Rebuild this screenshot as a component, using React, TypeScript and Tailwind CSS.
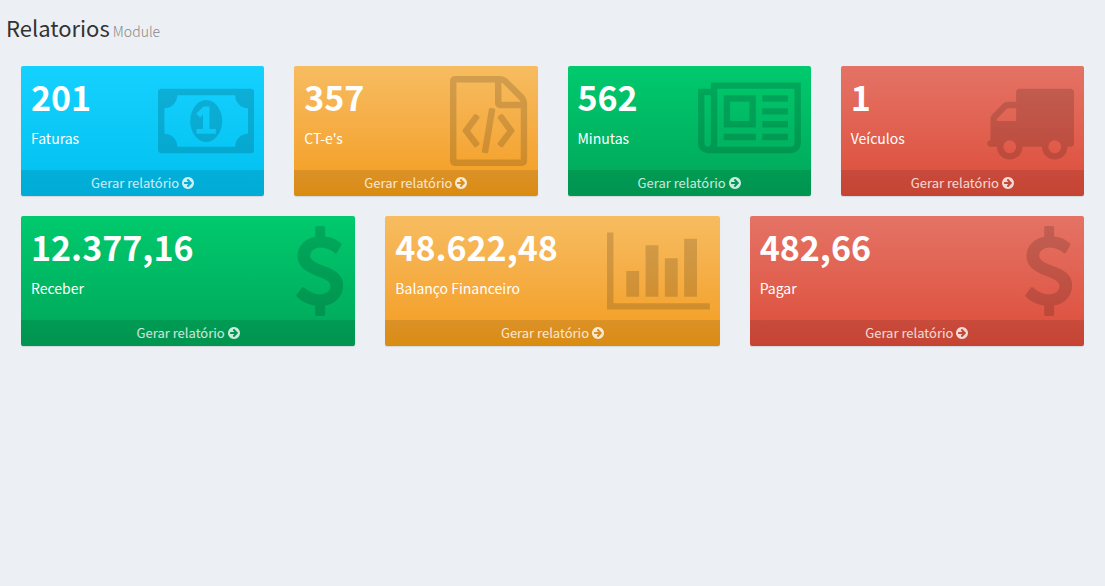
type IconShape = { width: number; x: number; d: string };

const MONEY: IconShape = {
  width: 1920,
  x: 0,
  d: "M768 1152h384v-96h-128v-448h-114l-148 137 77 80q42-37 55-57h2v288h-128v96zm512-256q0 70-21 142t-59.5 134-101.5 101-138 39-138-39-101.5-101-59.5-134-21-142 21-142 59.5-134 101.5-101 138-39 138 39 101.5 101 59.5 134 21 142zm512 256v-512q-106 0-181-75t-75-181h-1152q0 106-75 181t-181 75v512q106 0 181 75t75 181h1152q0-106 75-181t181-75zm128-832v1152q0 26-19 45t-45 19h-1792q-26 0-45-19t-19-45v-1152q0-26 19-45t45-19h1792q26 0 45 19t19 45z",
};

const FILE_CODE: IconShape = {
  width: 1536,
  x: 128,
  d: "M1596 380q28 28 48 76t20 88v1152q0 40-28 68t-68 28h-1344q-40 0-68-28t-28-68v-1600q0-40 28-68t68-28h896q40 0 88 20t76 48zm-444-244v376h376q-10-29-22-41l-313-313q-12-12-41-22zm384 1528v-1024h-416q-40 0-68-28t-28-68v-416h-768v1536h1280zm-928-896q8-11 21-12.5t24 6.5l51 38q11 8 12.5 21t-6.5 24l-182 243 182 243q8 11 6.5 24t-12.5 21l-51 38q-11 8-24 6.5t-21-12.5l-226-301q-14-19 0-38zm802 301q14 19 0 38l-226 301q-8 11-21 12.5t-24-6.5l-51-38q-11-8-12.5-21t6.5-24l182-243-182-243q-8-11-6.5-24t12.5-21l51-38q11-8 24-6.5t21 12.5zm-620 461q-13-2-20.5-13t-5.5-24l138-831q2-13 13-20.5t24-5.5l63 10q13 2 20.5 13t5.5 24l-138 831q-2 13-13 20.5t-24 5.5z",
};

const NEWSPAPER: IconShape = {
  width: 2048,
  x: 0,
  d: "M1024 512h-384v384h384v-384zm128 640v128h-640v-128h640zm0-768v640h-640v-640h640zm640 768v128h-512v-128h512zm0-256v128h-512v-128h512zm0-256v128h-512v-128h512zm0-256v128h-512v-128h512zm-1536 960v-960h-128v960q0 26 19 45t45 19 45-19 19-45zm1664 0v-1088h-1536v1088q0 33-11 64h1483q26 0 45-19t19-45zm128-1216v1216q0 80-56 136t-136 56h-1664q-80 0-136-56t-56-136v-1088h256v-128h1792z",
};

const TRUCK: IconShape = {
  width: 1792,
  x: 0,
  d: "M640 1408q0-52-38-90t-90-38-90 38-38 90 38 90 90 38 90-38 38-90zm-384-512h384v-256h-158q-13 0-22 9l-195 195q-9 9-9 22v30zm1280 512q0-52-38-90t-90-38-90 38-38 90 38 90 90 38 90-38 38-90zm256-1088v1024q0 15-4 26.5t-13.5 18.5-16.5 11.5-23.5 6-22.5 2-25.5 0-22.5-.5q0 106-75 181t-181 75-181-75-75-181h-384q0 106-75 181t-181 75-181-75-75-181h-64q-3 0-22.5.5t-25.5 0-22.5-2-23.5-6-16.5-11.5-13.5-18.5-4-26.5q0-26 19-45t45-19v-320q0-8-.5-35t0-38 2.5-34.5 6.5-37 14-30.5 22.5-30l198-198q19-19 50.5-32t58.5-13h160v-192q0-26 19-45t45-19h1024q26 0 45 19t19 45z",
};

const DOLLAR: IconShape = {
  width: 1024,
  x: 384,
  d: "M1362 1185q0 153-99.5 263.5t-258.5 136.5v175q0 14-9 23t-23 9h-135q-13 0-22.5-9.5t-9.5-22.5v-175q-66-9-127.5-31t-101.5-44.5-74-48-46.5-37.5-17.5-18q-17-21-2-41l103-135q7-10 23-12 15-2 24 9l2 2q113 99 243 125 37 8 74 8 81 0 142.5-43t61.5-122q0-28-15-53t-33.5-42-58.5-37.5-66-32-80-32.5q-39-16-61.5-25t-61.5-26.5-62.5-31-56.5-35.5-53.5-42.5-43.5-49-35.5-58-21-66.5-8.5-78q0-138 98-242t255-134v-180q0-13 9.5-22.5t22.5-9.5h135q14 0 23 9t9 23v176q57 6 110.5 23t87 33.5 63.5 37.5 39 29 15 14q17 18 5 38l-81 146q-8 15-23 16-14 3-27-7-3-3-14.5-12t-39-26.5-58.5-32-74.5-26-85.5-11.5q-95 0-155 43t-60 111q0 26 8.5 48t29.5 41.5 39.5 33 56 31 60.5 27 70 27.5q53 20 81 31.5t76 35 75.5 42.5 62 50 53 63.5 31.5 76.5 13 94z",
};

const BAR_CHART: IconShape = {
  width: 2048,
  x: 0,
  d: "M640 896v512h-256v-512h256zm384-512v1024h-256v-1024h256zm1024 1152v128h-2048v-1536h128v1408h1920zm-640-896v768h-256v-768h256zm384-384v1152h-256v-1152h256z",
};

const ARROW_CIRCLE: IconShape = {
  width: 1536,
  x: 128,
  d: "M1413 896q0-27-18-45l-91-91-362-362q-18-18-45-18t-45 18l-91 91q-18 18-18 45t18 45l189 189h-502q-26 0-45 19t-19 45v128q0 26 19 45t45 19h502l-189 189q-18 18-18 45t18 45l91 91q18 18 45 18t45-18l362-362 91-91q18-18 18-45zm251 0q0 209-103 385.5t-279.5 279.5-385.5 103-385.5-103-279.5-279.5-103-385.5 103-385.5 279.5-279.5 385.5-103 385.5 103 279.5 279.5 103 385.5z",
};

function Icon({ shape, className }: { shape: IconShape; className: string }) {
  return (
    <svg
      viewBox={`${shape.x} 0 ${shape.width} 1792`}
      className={className}
      fill="currentColor"
      aria-hidden="true"
    >
      <path d={shape.d} />
    </svg>
  );
}

const TONES = {
  aqua: "from-[#14d1ff] to-[#00c0ef]",
  yellow: "from-[#f7bc60] to-[#f39c12]",
  green: "from-[#00ca6d] to-[#00a65a]",
  red: "from-[#e47365] to-[#dd4b39]",
};

type Box = { value: string; label: string; tone: keyof typeof TONES; icon: IconShape };

const COUNTS: Box[] = [
  { value: "201", label: "Faturas", tone: "aqua", icon: MONEY },
  { value: "357", label: "CT-e's", tone: "yellow", icon: FILE_CODE },
  { value: "562", label: "Minutas", tone: "green", icon: NEWSPAPER },
  { value: "1", label: "Veículos", tone: "red", icon: TRUCK },
];

const AMOUNTS: Box[] = [
  { value: "12.377,16", label: "Receber", tone: "green", icon: DOLLAR },
  { value: "48.622,48", label: "Balanço Financeiro", tone: "yellow", icon: BAR_CHART },
  { value: "482,66", label: "Pagar", tone: "red", icon: DOLLAR },
];

function SmallBox({ value, label, tone, icon }: Box) {
  return (
    <section
      className={`overflow-hidden rounded-[2px] bg-linear-to-b text-white shadow-[0_1px_1px_rgba(0,0,0,0.1)] ${TONES[tone]}`}
    >
      <div className="flex items-start justify-between px-2.5 pt-2.5 pb-1">
        <div>
          <h2 className="text-[34px] leading-[42px] font-bold whitespace-nowrap">{value}</h2>
          <p className="mt-2.5 text-[14px] leading-[21px]">{label}</p>
        </div>
        <Icon shape={icon} className="h-[90px] w-auto shrink-0 text-black/15" />
      </div>
      <a
        href="#"
        className="flex items-center justify-center gap-[3px] bg-black/10 text-[13px] leading-[26px] text-white/80 hover:bg-black/15 hover:text-white"
      >
        Gerar relatório
        <Icon shape={ARROW_CIRCLE} className="h-3.5 w-3" />
      </a>
    </section>
  );
}

export default function App() {
  return (
    <div className="min-h-screen bg-[#ecf0f5] font-['Source_Sans_Pro','Noto_Sans_CJK_SC',sans-serif] text-[#333]">
      <header className="px-1.5 pt-3.5">
        <h1 className="text-[22px] leading-[27px]">
          Relatorios<small className="text-[14px] font-light text-[#888]"> Module</small>
        </h1>
      </header>
      <main className="flex flex-col gap-5 px-[21px] pt-[21px] pb-5">
        <div className="grid grid-cols-2 gap-x-[30px] gap-y-5 md:grid-cols-4">
          {COUNTS.map((box) => (
            <SmallBox key={box.label} {...box} />
          ))}
        </div>
        <div className="grid grid-cols-1 gap-x-[30px] gap-y-5 md:grid-cols-3">
          {AMOUNTS.map((box) => (
            <SmallBox key={box.label} {...box} />
          ))}
        </div>
      </main>
    </div>
  );
}
